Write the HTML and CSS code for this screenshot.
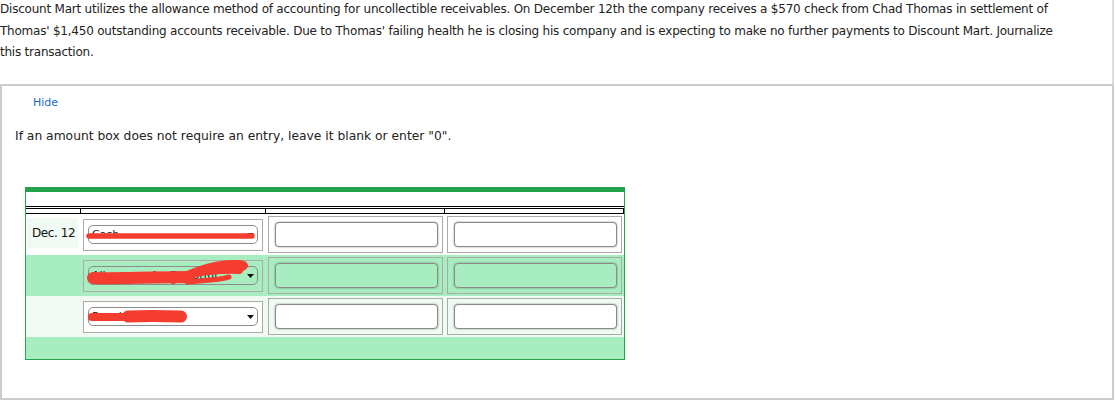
FILE: index.html
```html
<!DOCTYPE html>
<html>
<head>
<meta charset="utf-8">
<link rel="stylesheet" href="styles.css">
</head>
<body>
<div class="question">
  <p class="qtext">Discount Mart utilizes the allowance method of accounting for uncollectible receivables. On December 12th the company receives a $570 check from Chad Thomas in settlement of Thomas' $1,450 outstanding accounts receivable. Due to Thomas' failing health he is closing his company and is expecting to make no further payments to Discount Mart. Journalize this transaction.</p>
</div>
<div class="panel">
  <a class="hide">Hide</a>
  <p class="note">If an amount box does not require an entry, leave it blank or enter "0".</p>
  <div class="journal">
    <div class="jspace"></div>
    <div class="jrule"></div>
    <div class="jhead"><div></div><div></div><div></div><div></div></div>
    <div class="jrow r1">
      <div class="date">Dec. 12</div>
      <div class="acct">
        <div class="sel"><span>Cash</span><svg class="arrow" width="7" height="4" viewBox="0 0 7 4"><path d="M0 0H7L3.5 4Z"/></svg></div>
        <svg class="redact" width="180" height="32" viewBox="0 0 180 32"><path d="M6 17 L169 17" stroke-width="5.5"/></svg>
      </div>
      <div class="amt"><input type="text"></div>
      <div class="amt"><input type="text"></div>
    </div>
    <div class="jrow r2">
      <div class="date empty"></div>
      <div class="acct">
        <div class="sel"><span>Allowance for Doubtful</span><svg class="arrow" width="7" height="4" viewBox="0 0 7 4"><path d="M0 0H7L3.5 4Z"/></svg></div>
        <svg class="redact" width="180" height="32" viewBox="0 0 180 32">
          <path d="M10 18 C37 19, 77 17, 106 17" stroke-width="12"/>
          <path d="M90 21 C110 10, 132 2, 157 3 C165 4, 163 9, 153 9" stroke-width="6"/>
          <path d="M98 17 C117 11, 134 9, 156 10" stroke-width="8"/>
          <path d="M104 22 C120 20, 132 21, 146 17" stroke-width="5"/>
        </svg>
      </div>
      <div class="amt"><input type="text"></div>
      <div class="amt"><input type="text"></div>
    </div>
    <div class="jrow r3">
      <div class="date empty"></div>
      <div class="acct">
        <div class="sel"><span>Receivable</span><svg class="arrow" width="7" height="4" viewBox="0 0 7 4"><path d="M0 0H7L3.5 4Z"/></svg></div>
        <svg class="redact" width="180" height="32" viewBox="0 0 180 32">
          <path d="M9 16 L50 16" stroke-width="8"/>
          <path d="M45 15.5 C65 14.5, 85 15, 98 15.5" stroke-width="12"/>
        </svg>
      </div>
      <div class="amt"><input type="text"></div>
      <div class="amt"><input type="text"></div>
    </div>
    <div class="jrow r4"></div>
  </div>
</div>
</body>
</html>
```
FILE: styles.css
```css
html, body {
  margin: 0;
  padding: 0;
  background: #fff;
}
body {
  font-family: "DejaVu Sans", Verdana, sans-serif;
  color: #222;
}
.question {
  width: 1114px;
  height: 84px;
  box-sizing: border-box;
  border-right: 2px solid #ddd;
  padding-right: 40px;
  overflow: hidden;
}
.qtext {
  margin: -1px 0 0 0;
  font-size: 12px;
  letter-spacing: -0.22px;
  line-height: 21.5px;
}
.panel {
  width: 1114px;
  height: 316px;
  box-sizing: border-box;
  border: 2px solid #ccc;
  padding: 9px 0 0 0;
}
.hide {
  display: block;
  margin-left: 31px;
  font-size: 11px;
  line-height: 16px;
  color: #1a6bc4;
  width: max-content;
}
.note {
  margin: 15px 0 0 13px;
  font-size: 12.3px;
  line-height: 21px;
}
.journal {
  margin: 40px 0 0 23px;
  width: 600px;
  box-sizing: border-box;
  border: 1px solid #27a14d;
  border-top: 5px solid #22a24a;
  background: #fff;
}
.jspace {
  height: 14px;
}
.jrule {
  height: 1px;
  background: #000;
  margin-bottom: 1px;
}
.jhead {
  display: grid;
  grid-template-columns: 54px 185px 179px 180px;
  height: 4px;
  border-top: 1px solid #000;
  border-bottom: 1px solid #000;
  border-right: 1px solid #000;
}
.jhead div + div {
  border-left: 1px solid #000;
}
.jrow {
  display: grid;
  grid-template-columns: 54px 185px 179px 180px;
  height: 41px;
  align-items: start;
}
.r1 { background: #fff; }
.r2 { background: #a8edbf; }
.r3 { background: #f0faf2; }
.r4 { background: #a8edbf; height: 22px; }
.date {
  margin: 4px 0 0 1px;
  width: 51px;
  height: 30px;
  box-sizing: border-box;
  padding-left: 5px;
  background: #f0faf2;
  font-size: 12px;
  letter-spacing: -0.4px;
  line-height: 31px;
  color: #111;
  white-space: nowrap;
}
.date.empty {
  background: transparent;
}
.acct {
  position: relative;
  margin: 5px 0 0 3px;
  width: 180px;
  height: 32px;
  box-sizing: border-box;
  border: 1px solid #aaa;
  padding: 5px 4px 0 4px;
  background: #fff;
}
.r2 .acct { background: transparent; }
.sel {
  display: flex;
  align-items: center;
  justify-content: space-between;
  height: 19px;
  box-sizing: border-box;
  border: 1px solid #8c8c8c;
  border-radius: 5px;
  padding: 0 3px 0 3px;
  font-size: 11px;
  color: #222;
  white-space: nowrap;
}
.arrow {
  flex: none;
  margin-left: 4px;
}
.arrow path {
  fill: #111;
}
.redact {
  position: absolute;
  left: -1px;
  top: -1px;
}
.redact path {
  fill: none;
  stroke: #f43d2f;
  stroke-linecap: round;
  stroke-linejoin: round;
}
.amt {
  margin: 2px 0 0 3px;
  width: 175px;
  height: 37px;
  box-sizing: border-box;
  border: 1px solid #aaa;
  padding: 5px 4px 0 6px;
}
.amt input {
  display: block;
  width: 100%;
  height: 25px;
  box-sizing: border-box;
  margin: 0;
  border: 1px solid #8a8a8a;
  border-radius: 4px;
  background: #fff;
  box-shadow: 0 0 2px rgba(0, 0, 0, 0.45);
  outline: none;
  padding: 0 4px;
  font-family: "DejaVu Sans", sans-serif;
}
.r2 .amt input {
  background: transparent;
}
```
